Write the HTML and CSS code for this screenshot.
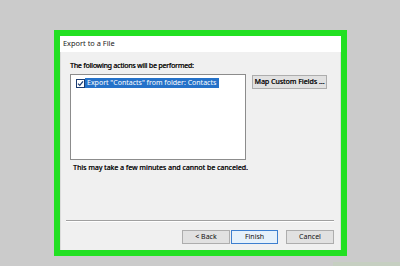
FILE: index.html
```html
<!DOCTYPE html>
<html>
<head>
<meta charset="utf-8">
<link rel="stylesheet" href="styles.css">
</head>
<body>
<div class="frame">
  <div class="titlebar">Export to a File</div>
  <div class="content">
    <div class="inner">
      <div class="heading">The following actions will be performed:</div>
      <div class="row">
        <div class="listbox">
          <div class="item">
            <svg class="check" width="9" height="9" viewBox="0 0 9 9">
              <rect x="0.5" y="0.5" width="8" height="8" fill="#fff" stroke="#1c3d72"/>
              <path d="M2 4.6 L3.8 6.4 L7 2.4" fill="none" stroke="#1c3d72" stroke-width="1.3"/>
            </svg>
            <span class="sel">Export "Contacts" from folder: Contacts</span>
          </div>
        </div>
        <div class="btn map">Map Custom Fields ...</div>
      </div>
      <div class="note">This may take a few minutes and cannot be canceled.</div>
    </div>
    <div class="spacer"></div>
    <div class="separator"></div>
    <div class="buttons">
      <div class="btn nav">&lt; Back</div>
      <div class="btn nav primary">Finish</div>
      <div class="btn nav cancel">Cancel</div>
    </div>
  </div>
</div>
<div class="watermark"></div>
</body>
</html>
```

FILE: styles.css
```css
html, body {
  margin: 0;
  padding: 0;
}
body {
  width: 400px;
  height: 266px;
  overflow: hidden;
  background: #cbcbcb;
  font-family: "Noto Sans", "Liberation Sans", sans-serif;
  font-size: 7px;
  color: #111;
  position: relative;
}
.frame {
  margin: 30px 0 0 54px;
  width: 293px;
  height: 226px;
  box-sizing: border-box;
  border: 6px solid #22e022;
  background: #f0f0f0;
  display: flex;
  flex-direction: column;
}
.titlebar {
  height: 16px;
  line-height: 15px;
  background: #fff;
  padding-left: 3px;
  font-size: 7.4px;
  color: #1a1a1a;
}
.content {
  flex: 1;
  display: flex;
  flex-direction: column;
  padding: 9px 7px 6px 6px;
  box-shadow: inset 1px 0 0 #dcdcdc, inset -1px 0 0 #dcdcdc;
}
.inner {
  padding-left: 4px;
}
.heading {
  line-height: 10px;
  letter-spacing: -0.2px;
  text-shadow: 0.3px 0 0 #111;
}
.row {
  display: flex;
  gap: 6px;
  margin-top: 3px;
  align-items: flex-start;
}
.listbox {
  width: 176px;
  height: 86px;
  box-sizing: border-box;
  border: 1px solid #8c8c8c;
  background: #fff;
  padding: 3px 0 0 5px;
}
.item {
  display: flex;
  align-items: center;
  height: 10px;
}
.check {
  display: block;
}
.sel {
  background: #2572c9;
  color: #fff;
  line-height: 10px;
  padding: 0 3px 0 2px;
  white-space: nowrap;
}
.btn {
  box-sizing: border-box;
  border: 1px solid #adadad;
  background: #e1e1e1;
  text-align: center;
  white-space: nowrap;
}
.map {
  margin-top: 1px;
  width: 75px;
  height: 14px;
  line-height: 12px;
  text-shadow: 0.3px 0 0 #111;
}
.note {
  margin: 3px 0 0 3px;
  line-height: 10px;
  text-shadow: 0.3px 0 0 #111;
}
.spacer {
  flex: 1;
}
.separator {
  height: 0;
  border-top: 1px solid #a0a0a0;
  border-bottom: 1px solid #fff;
}
.buttons {
  display: flex;
  justify-content: flex-end;
  margin-top: 8px;
}
.nav {
  width: 48px;
  height: 14px;
  line-height: 12px;
}
.primary {
  margin-left: 1px;
  width: 47px;
  background: #e5f1fb;
  border-color: #3d7fcf;
}
.cancel {
  margin-left: 8px;
}
.watermark {
  position: absolute;
  left: 333px;
  top: 262px;
  width: 67px;
  height: 4px;
  background: #c6cfc1;
}
```
